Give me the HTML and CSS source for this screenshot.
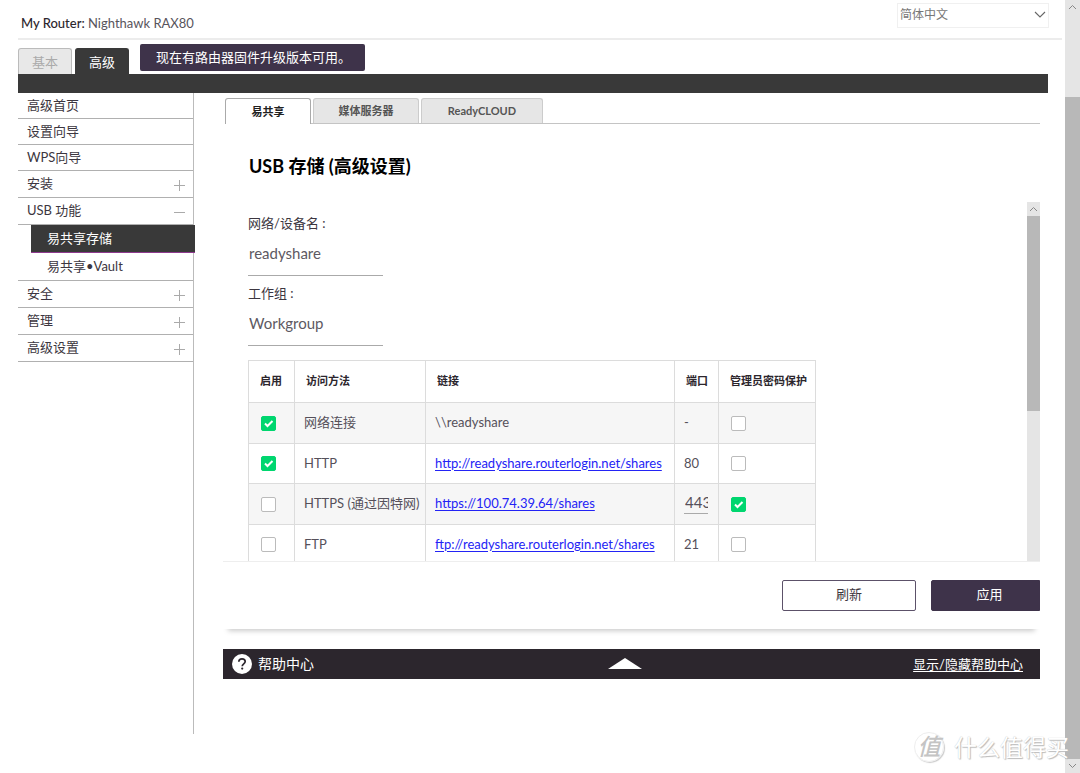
FILE: index.html
```html
<!DOCTYPE html>
<html lang="zh-CN">
<head>
<meta charset="utf-8">
<title>Nighthawk RAX80</title>
<link rel="stylesheet" href="styles.css">
</head>
<body>
<div class="page">
  <header class="header">
    <div class="router"><strong>My Router:</strong> Nighthawk RAX80</div>
    <div class="lang">
      <select class="lang-select" aria-label="语言"><option>简体中文</option></select>
      <svg class="lang-arrow" viewBox="0 0 12 8" width="12" height="8"><path d="M1 1l5 5 5-5" fill="none" stroke="#666" stroke-width="1.1"/></svg>
    </div>
  </header>
  <nav class="top-tabs">
    <button class="top-tab">基本</button>
    <button class="top-tab top-tab-on">高级</button>
    <a class="notice" href="#">现在有路由器固件升级版本可用。</a>
  </nav>
  <div class="bar"></div>
  <div class="body">
    <nav class="side">
      <a class="item" href="#">高级首页</a>
      <a class="item" href="#">设置向导</a>
      <a class="item" href="#">WPS向导</a>
      <a class="item item-tall" href="#">安装<svg class="sign" viewBox="0 0 11 11"><path d="M0 5.5h11M5.5 0v11"/></svg></a>
      <a class="item item-tall" href="#">USB 功能<svg class="sign" viewBox="0 0 11 11"><path d="M0 5.5h11"/></svg></a>
      <a class="sub sub-on" href="#">易共享存储</a>
      <a class="sub sub-last" href="#"><span class="sub-text">易共享•Vault</span></a>
      <a class="item item-tall" href="#">安全<svg class="sign" viewBox="0 0 11 11"><path d="M0 5.5h11M5.5 0v11"/></svg></a>
      <a class="item item-tall" href="#">管理<svg class="sign" viewBox="0 0 11 11"><path d="M0 5.5h11M5.5 0v11"/></svg></a>
      <a class="item item-tall" href="#">高级设置<svg class="sign" viewBox="0 0 11 11"><path d="M0 5.5h11M5.5 0v11"/></svg></a>
    </nav>
    <main class="main">
      <section class="panel">
        <div class="tabs">
          <button class="tab tab-on">易共享</button>
          <button class="tab tab-media">媒体服务器</button>
          <button class="tab tab-cloud">ReadyCLOUD</button>
        </div>
        <h1 class="title">USB 存储 (高级设置)</h1>
        <div class="scroller">
          <form class="form">
            <div class="field">
              <label class="label" for="device">网络/设备名 :</label>
              <input class="text" id="device" type="text" value="readyshare">
            </div>
            <div class="field">
              <label class="label" for="group">工作组 :</label>
              <input class="text" id="group" type="text" value="Workgroup">
            </div>
            <table class="table">
              <colgroup><col class="c-on"><col class="c-method"><col class="c-link"><col class="c-port"><col class="c-pass"></colgroup>
              <thead>
                <tr><th>启用</th><th>访问方法</th><th>链接</th><th>端口</th><th>管理员密码保护</th></tr>
              </thead>
              <tbody>
                <tr><td><input class="check" type="checkbox" aria-label="启用 网络连接" checked></td><td>网络连接</td><td>\\readyshare</td><td>-</td><td><input class="check" type="checkbox" aria-label="密码保护 网络连接"></td></tr>
                <tr><td><input class="check" type="checkbox" aria-label="启用 HTTP" checked></td><td>HTTP</td><td><a class="link" href="#">http://readyshare.routerlogin.net/shares</a></td><td>80</td><td><input class="check" type="checkbox" aria-label="密码保护 HTTP"></td></tr>
                <tr><td><input class="check" type="checkbox" aria-label="启用 HTTPS"></td><td>HTTPS (通过因特网)</td><td><a class="link" href="#">https://100.74.39.64/shares</a></td><td><input class="port" type="text" aria-label="端口" value="443"></td><td><input class="check" type="checkbox" aria-label="密码保护 HTTPS" checked></td></tr>
                <tr><td><input class="check" type="checkbox" aria-label="启用 FTP"></td><td>FTP</td><td><a class="link" href="#">ftp://readyshare.routerlogin.net/shares</a></td><td>21</td><td><input class="check" type="checkbox" aria-label="密码保护 FTP"></td></tr>
              </tbody>
            </table>
          </form>
          <div class="track track-inner">
            <svg class="arrow" viewBox="0 0 13 14"><path d="M3 9l3.500-3.500L10 9"/></svg>
            <div class="thumb thumb-inner"></div>
          </div>
        </div>
        <div class="actions">
          <button class="btn">刷新</button>
          <button class="btn btn-main">应用</button>
        </div>
      </section>
      <footer class="help">
        <svg class="q" viewBox="0 0 20 20"><circle cx="10" cy="10" r="10" fill="#fff"/><path d="M6.800 7.800C6.900 5.800 8.200 4.900 10 4.900c1.900 0 3.200 1 3.200 2.700 0 2.300-3 2.300-3 4.700" fill="none" stroke="#2c262d" stroke-width="1.700"/><circle cx="10.200" cy="14.600" r="1.100" fill="#2c262d"/></svg>
        <span class="help-name">帮助中心</span>
        <svg class="up" viewBox="0 0 34 11"><path d="M0 11L17 0l17 11z" fill="#fff"/></svg>
        <a class="help-link" href="#">显示/隐藏帮助中心</a>
      </footer>
    </main>
  </div>
</div>
<div class="track track-page">
  <svg class="arrow" viewBox="0 0 15 14"><path d="M4 9l3.500-3.500L11 9"/></svg>
  <div class="thumb thumb-page"></div>
  <svg class="arrow" viewBox="0 0 15 14"><path d="M4 5l3.500 3.500L11 5"/></svg>
</div>
<div class="mark"><span class="mark-logo">值</span>什么值得买</div>
</body>
</html>
```

FILE: styles.css
```css
* { box-sizing: border-box; }
body {
  margin: 0;
  height: 100vh;
  display: flex;
  overflow: hidden;
  position: relative;
  background: #fff;
  color: #3c3640;
  font: 13px/18px Lato, "Noto Sans CJK SC", sans-serif;
}
button, input, select { font: inherit; color: inherit; margin: 0; }
button { cursor: pointer; }
a { color: inherit; text-decoration: none; }
.page { flex: 1; min-width: 0; padding-left: 18px; display: flex; flex-direction: column; }

.header {
  height: 40px;
  margin-right: 3px;
  padding: 3px 13px 0 3px;
  display: flex;
  justify-content: space-between;
  border-bottom: 2px solid #ececec;
}
.router { padding-top: 11px; color: #58545c; }
.router strong { font-weight: 500; color: #2c262d; }
.lang { position: relative; width: 152px; height: 25px; }
.lang-select {
  width: 100%;
  height: 100%;
  padding: 0 2px 2px;
  appearance: none;
  background: #fff;
  border: 1px solid #f0f0f0;
  font-size: 12px;
  color: #777;
}
.lang-arrow { position: absolute; right: 3px; top: 8px; pointer-events: none; }

.top-tabs { display: flex; align-items: flex-end; height: 34px; margin-right: 17px; }
.top-tab {
  width: 54px;
  height: 26px;
  margin-right: 3px;
  padding: 0;
  background: #e8e8e8;
  border: 1px solid #bbb;
  border-bottom: 0;
  border-radius: 3px 3px 0 0;
  color: #aaa;
}
.top-tab-on { background: #393939; border-color: #393939; color: #fff; }
.notice {
  align-self: flex-start;
  margin: 4px 0 0 8px;
  width: 225px;
  height: 27px;
  padding: 0 16px;
  line-height: 26px;
  background: #3e334a;
  border-radius: 2px;
  color: #fff;
  white-space: nowrap;
}
.bar { height: 19px; margin-right: 17px; background: #393939; }

.body { display: flex; flex: 1; min-height: 0; padding-right: 25px; }
.side { width: 176px; flex: none; border-right: 1px solid #bbb; margin-bottom: 39px; }
.item {
  display: flex;
  align-items: center;
  justify-content: space-between;
  height: 26px;
  padding: 0 8px 2px 9px;
  border-bottom: 1px solid #b0b0b0;
}
.item-tall { height: 27px; }
.sign { width: 11px; height: 11px; margin-top: 4px; fill: none; stroke: #aaa; }
.sub { display: flex; align-items: center; height: 28px; padding: 0 0 2px 16px; margin-left: 13px; }
.sub-on { margin-right: -2px; background: #393939; border-bottom: 1px solid #8e3a8e; color: #fff; position: relative; }
.sub-last { margin-left: 0; padding-left: 29px; border-bottom: 1px solid #b0b0b0; }

.main { flex: 1; min-width: 0; padding-left: 29px; }
.panel { padding: 5px 0 18px; box-shadow: 0 7px 5px -5px #ccc; }
.tabs { display: flex; gap: 2px; margin-left: 2px; border-bottom: 1px solid #c4c4c4; }
.tab {
  height: 25px;
  padding: 0;
  background: #e6e6e6;
  border: 1px solid #ccc;
  border-bottom: 0;
  border-radius: 3px 3px 0 0;
  font-size: 11px;
  font-weight: 700;
  color: #555;
}
.tab-on { width: 86px; height: 26px; margin-bottom: -1px; background: #fff; border-color: #aaa; color: #222; }
.tab-media { width: 106px; }
.tab-cloud { width: 122px; }
.title { margin: 29px 0 23px 26px; font-size: 18px; line-height: 26px; color: #000; }
.scroller {
  display: flex;
  justify-content: space-between;
  height: 360px;
  overflow: hidden;
  border-bottom: 1px solid #eee;
}
.form { padding: 12px 0 0 25px; }
.field { display: flex; flex-direction: column; margin-bottom: 8px; }
.label { line-height: 18px; }
.text {
  width: 135px;
  height: 44px;
  padding: 0 0 2px 1px;
  background: none;
  border: 0;
  border-bottom: 1px solid #aaa;
  border-radius: 0;
  font-size: 15px;
  color: #5d5962;
}
.table { margin-top: 14px; width: 567px; border-collapse: collapse; table-layout: fixed; }
.c-on { width: 46px; }
.c-method { width: 131px; }
.c-link { width: 249px; }
.c-port { width: 44px; }
.c-pass { width: 97px; }
.table th, .table td { border: 1px solid #dcdcdc; text-align: left; white-space: nowrap; }
.table th { height: 42px; padding: 0 0 1px 11px; font-size: 11px; color: #2c262d; }
.table td { height: 41px; padding: 0 0 2px 9px; color: #55505a; }
.table tbody tr:nth-child(even) td { height: 40px; }
.table tbody tr:nth-child(odd) { background: #f6f6f6; }
.table td:first-child, .table td:last-child { padding: 0 0 0 12px; }
.link { color: #2323f5; text-decoration: underline; text-underline-offset: 2px; }
.check {
  appearance: none;
  display: block;
  width: 15px;
  height: 15px;
  background: #fff;
  border: 1px solid #bbb;
  border-radius: 2px;
}
.check:checked {
  border-color: #00d66f;
  background: #00d66f url("data:image/svg+xml,%3Csvg xmlns='http://www.w3.org/2000/svg' viewBox='0 0 13 13'%3E%3Cpath d='M3 6.500l2.500 2.500L10.500 4' fill='none' stroke='white' stroke-width='2'/%3E%3C/svg%3E") center / 13px no-repeat;
}
.port {
  display: block;
  width: 24px;
  height: 22px;
  padding: 0 0 1px 1px;
  background: none;
  border: 0;
  border-bottom: 1px solid #aaa;
  border-radius: 0;
  font-size: 15px;
}
.actions { display: flex; justify-content: flex-end; gap: 15px; padding-top: 18px; }
.btn {
  width: 134px;
  height: 31px;
  padding: 0 0 3px;
  background: #fff;
  border: 1px solid #5c5169;
  border-radius: 2px;
}
.btn-main { width: 109px; padding-left: 8px; background: #3e334a; border-color: #3e334a; border-radius: 2px 0 0 2px; color: #fff; }

.help {
  display: flex;
  align-items: center;
  height: 30px;
  margin-top: 20px;
  padding: 0 17px 1px 9px;
  background: #2c262d;
  color: #fff;
}
.q { width: 20px; height: 20px; }
.help-name { flex: 11; padding-left: 6px; font-size: 14px; }
.up { width: 34px; height: 11px; }
.help-link { flex: 12; text-align: right; text-decoration: underline; text-underline-offset: 2px; }

.track { display: flex; flex-direction: column; background: #e5e5e5; }
.track-page { width: 15px; }
.track-inner { width: 13px; }
.arrow { flex: none; width: 100%; height: 14px; fill: none; stroke: #888; }
.thumb { background: #b8b8b8; }
.thumb-page { flex: 1; margin-top: 83px; }
.thumb-inner { height: 195px; }

.mark {
  position: absolute;
  right: 11px;
  bottom: 11px;
  display: flex;
  align-items: center;
  gap: 10px;
  font-size: 23px;
  line-height: 30px;
  color: #fff;
  text-shadow: 1px 1px 1px #bbb, 0 0 1px #bbb;
}
.mark-logo {
  width: 30px;
  height: 30px;
  border: 1px solid #eee;
  border-radius: 50%;
  box-shadow: 1px 1px 1px #ccc;
  text-align: center;
  line-height: 26px;
  font-style: italic;
  font-weight: 500;
  color: #c4c4c4;
  text-shadow: none;
}
```
